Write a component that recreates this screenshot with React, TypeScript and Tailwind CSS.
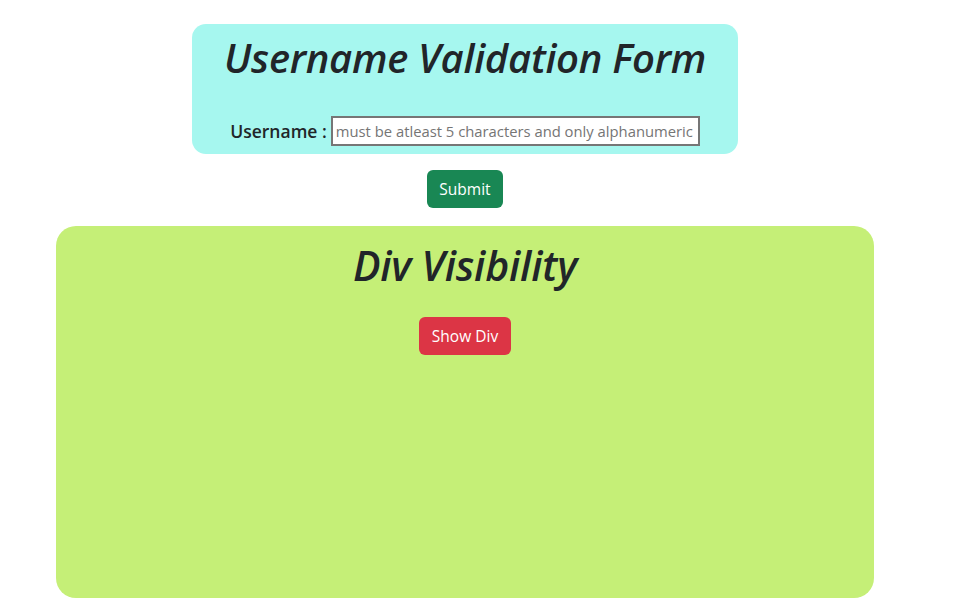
import React from "react";

export default function App() {
  const font = { fontFamily: '"Open Sans", "Noto Sans", sans-serif' };
  return (
    <div className="w-[930px] bg-white text-[#212529] flex flex-col items-center" style={font}>
      <div className="mt-[24px] w-[546px] h-[130px] bg-[#a6f7ef] rounded-[14px] flex flex-col items-center pt-[10px]">
        <h1 className="h-[48px] leading-[48px] text-[40px] font-semibold italic tracking-[-0.3px] whitespace-nowrap">
          Username Validation Form
        </h1>
        <div className="mt-[34px] flex items-center h-[30px]">
          <label className="text-[17.5px] font-semibold mr-[4px] whitespace-nowrap">Username :</label>
          <input
            className="w-[369px] h-[30px] border-2 border-[#767676] bg-white px-[3px] text-[14.8px] outline-none placeholder:text-[#757575]"
            placeholder="must be atleast 5 characters and only alphanumeric"
          />
        </div>
      </div>
      <button className="mt-[16px] w-[76px] h-[38px] bg-[#198754] text-white rounded-[6px] text-[15.5px] pt-[1px]">
        Submit
      </button>
      <div className="mt-[18px] w-[818px] h-[372px] bg-[#c5ef77] rounded-[20px] flex flex-col items-center pt-[15px]">
        <h1 className="h-[48px] leading-[48px] text-[41px] font-semibold italic tracking-[-0.2px] whitespace-nowrap">
          Div Visibility
        </h1>
        <button className="mt-[28px] w-[92px] h-[38px] bg-[#dc3545] text-white rounded-[6px] text-[15.5px] pt-[1px]">
          Show Div
        </button>
      </div>
    </div>
  );
}
